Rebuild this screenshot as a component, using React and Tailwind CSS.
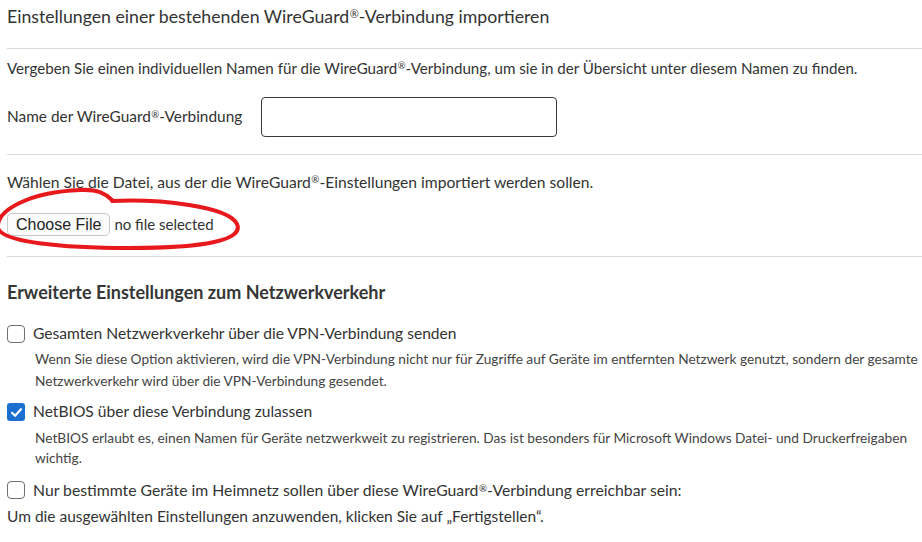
import React from "react";

function R() {
  return <span className="text-[0.62em] relative -top-[0.45em] ml-[0.5px]">®</span>;
}

function Check({ checked }) {
  if (checked) {
    return (
      <span className="w-[18px] h-[18px] shrink-0 rounded-[3px] bg-[#1a6fd1] flex items-center justify-center">
        <svg width="13" height="13" viewBox="0 0 13 13" fill="none">
          <path d="M2 6.8 L5.1 9.8 L11 3.2" stroke="white" strokeWidth="2.2" strokeLinecap="round" strokeLinejoin="round" />
        </svg>
      </span>
    );
  }
  return <span className="w-[18px] h-[18px] shrink-0 rounded-[4px] border-[1.5px] border-[#707070] bg-white" />;
}

export default function App() {
  return (
    <div className="w-[922px] h-[542px] bg-white text-[#333] overflow-hidden relative" style={{ fontFamily: "Lato, 'Noto Sans', sans-serif" }}>
      <div className="pl-[7px]">
        <div className="h-[48px] flex items-center text-[17.7px] pb-[14px]">
          <span>Einstellungen einer bestehenden WireGuard<R />-Verbindung importieren</span>
        </div>
        <div className="border-t border-[#dcdcdc]" />
        <div className="h-[38px] flex items-center text-[15.15px]">
          <span>Vergeben Sie einen individuellen Namen für die WireGuard<R />-Verbindung, um sie in der Übersicht unter diesem Namen zu finden.</span>
        </div>
        <div className="flex items-center h-[40px] mt-[10px]">
          <span className="w-[254px] text-[15.4px]">Name der WireGuard<R />-Verbindung</span>
          <div className="w-[296px] h-[40px] border border-[#3a3a3a] rounded-[4px]" />
        </div>
        <div className="h-[17px]" />
        <div className="border-t border-[#dcdcdc]" />
        <div className="h-[55px] flex items-center text-[15.65px]">
          <span>Wählen Sie die Datei, aus der die WireGuard<R />-Einstellungen importiert werden sollen.</span>
        </div>
        <div className="flex items-center h-[23px] mt-[3px]">
          <span className="h-[23px] px-[8px] flex items-center rounded-[5px] border border-[#c8c8c8] bg-[#fbfbfb] text-[16px] text-[#222]" style={{ fontFamily: "'Liberation Sans', Arial, sans-serif" }}>
            Choose File
          </span>
          <span className="ml-[4px] text-[15px]">no file selected</span>
        </div>
        <div className="h-[20px]" />
        <div className="border-t border-[#dcdcdc]" />
        <div className="h-[71px] flex items-center text-[18px] font-bold text-[#363636]">
          Erweiterte Einstellungen zum Netzwerkverkehr
        </div>
        <div className="flex items-center gap-[8px] h-[20px] -mt-[4px]">
          <Check />
          <span className="text-[15.6px]">Gesamten Netzwerkverkehr über die VPN-Verbindung senden</span>
        </div>
        <div className="pl-[28px] pt-[4px] text-[13.7px] leading-[22px] text-[#444] whitespace-nowrap">
          <div>Wenn Sie diese Option aktivieren, wird die VPN-Verbindung nicht nur für Zugriffe auf Geräte im entfernten Netzwerk genutzt, sondern der gesamte</div>
          <div>Netzwerkverkehr wird über die VPN-Verbindung gesendet.</div>
        </div>
        <div className="flex items-center gap-[8px] h-[20px] mt-[10px]">
          <Check checked />
          <span className="text-[15.6px]">NetBIOS über diese Verbindung zulassen</span>
        </div>
        <div className="pl-[28px] pt-[6px] text-[13.7px] leading-[20px] text-[#444] whitespace-nowrap">
          <div>NetBIOS erlaubt es, einen Namen für Geräte netzwerkweit zu registrieren. Das ist besonders für Microsoft Windows Datei- und Druckerfreigaben</div>
          <div>wichtig.</div>
        </div>
        <div className="flex items-center gap-[8px] h-[20px] mt-[12px]">
          <Check />
          <span className="text-[15.75px]">Nur bestimmte Geräte im Heimnetz sollen über diese WireGuard<R />-Verbindung erreichbar sein:</span>
        </div>
        <div className="text-[15.5px] mt-[5px]">
          Um die ausgewählten Einstellungen anzuwenden, klicken Sie auf „Fertigstellen“.
        </div>
      </div>
      <svg className="absolute left-0 top-0 pointer-events-none" width="260" height="260" viewBox="0 0 260 260" fill="none">
        <path
          d="M112 201 C160 199 228 206 237 224 C244 240 205 248 130 248 C60 248 2 242 -2 228 C-4 210 30 192 80 190 C98 189 106 194 112 200"
          stroke="#e8191c"
          strokeWidth="4"
          strokeLinecap="round"
        />
      </svg>
    </div>
  );
}
